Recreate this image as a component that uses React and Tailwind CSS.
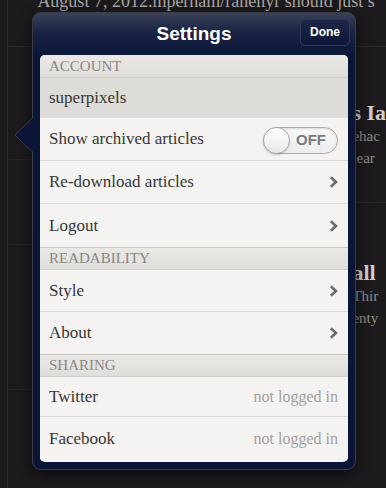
import React from 'react';

const serif = { fontFamily: '"Liberation Serif", "Times New Roman", serif' };
const sans = { fontFamily: '"Liberation Sans", Arial, sans-serif' };

const Chevron = () => (
  <svg width="9" height="12" viewBox="0 0 9 12" className="shrink-0">
    <path d="M1.8 1.2 L7 6 L1.8 10.8" fill="none" stroke="#6d6c6b" strokeWidth="2.6" strokeLinejoin="miter" />
  </svg>
);

const SectionHeader = ({ label, first = false }) => (
  <div
    className={`h-[23px] flex items-center px-[9px] text-[15px] text-[#8a8783] bg-[linear-gradient(to_bottom,#ebe9e6,#dfddda)] border-b border-[#d2d0cd] ${first ? '' : 'border-t border-t-[#c9c7c4]'}`}
    style={serif}
  >
    {label}
  </div>
);

const Row = ({ label, height = 'h-[43px]', right = null, chevron = false, shaded = false, last = false }) => (
  <div
    className={`${height} flex items-center justify-between pl-[9px] pr-[10px] ${shaded ? 'bg-[#dddcd9]' : 'bg-[#f4f3f2]'} ${last ? '' : 'border-b border-[#dddbd8]'}`}
  >
    <span className="text-[17px] text-[#383634]" style={serif}>{label}</span>
    {right}
    {chevron && <Chevron />}
  </div>
);

const Toggle = () => (
  <div className="w-[75px] h-[27px] mt-[3px] rounded-full border border-[#aaa9a8] bg-[linear-gradient(to_bottom,#f9f9f9,#ececec)] flex items-center shadow-[inset_0_1px_2px_rgba(0,0,0,0.12)]">
    <div className="w-[27px] h-[27px] -ml-px rounded-full border border-[#a9a8a7] bg-[linear-gradient(to_bottom,#ffffff,#e8e8e8)] shadow-[0_1px_2px_rgba(0,0,0,0.2)]" />
    <span className="ml-[6px] text-[15px] font-bold text-[#7b7b7b]" style={sans}>OFF</span>
  </div>
);

const NotLogged = () => (
  <span className="text-[16px] text-[#a3a09d]" style={serif}>not logged in</span>
);

const Background = () => (
  <div className="flex h-full">
    <div className="w-[13px] border-r border-[#2b292c]" />
    <div className="flex-1 flex flex-col">
      <div className="h-[47px] border-b border-[#2a282b] overflow-hidden">
        <div className="-mt-[12px] pl-[29px] whitespace-nowrap text-[18px] text-[#a9a6a6]" style={serif}>
          August 7, 2012.mperham/rahenyr should just s
        </div>
      </div>
      <div className="flex flex-1">
        <div className="w-[340px] flex flex-col">
          <div className="h-[113px] border-b border-[#262427]" />
          <div className="h-[85px] border-b border-[#262427]" />
          <div className="h-[145px] border-b border-[#262427]" />
        </div>
        <div className="flex-1 flex flex-col overflow-hidden whitespace-nowrap" style={serif}>
          <div className="h-[156px] border-b border-[#2a282b] pt-[54px] pl-[4px]">
            <div className="text-[22px] font-bold leading-[24px] text-[#cfcdcc]">s Ia</div>
            <div className="text-[15px] leading-[22px] text-[#8f8c8b]">ehac</div>
            <div className="text-[15px] leading-[22px] text-[#8f8c8b]">lear</div>
          </div>
          <div className="pt-[58px] pl-[4px]">
            <div className="text-[22px] font-bold leading-[24px] text-[#cfcdcc]">all</div>
            <div className="text-[15px] leading-[22px] text-[#8f8c8b]">Thir</div>
            <div className="text-[15px] leading-[22px] text-[#8f8c8b]">enty</div>
          </div>
        </div>
      </div>
    </div>
  </div>
);

export default function App() {
  return (
    <div className="relative w-[386px] h-[488px] overflow-hidden bg-[#1c1a1d]">
      <Background />

      {/* popover */}
      <div className="absolute left-[32px] top-[12px] w-[324px] h-[458px] rounded-[9px] border border-[#3a3c48] bg-[linear-gradient(to_bottom,#3a4259_0px,#1a2444_18px,#0b1537_43px,#0a1435_100%)] shadow-[0_4px_14px_rgba(0,0,0,0.6)] flex flex-col px-[7px] pb-[7px]">
        <div className="h-[42px] shrink-0 flex items-center justify-center relative">
          <span className="text-[19px] font-bold text-white" style={sans}>Settings</span>
          <div className="absolute right-[-2px] top-[5px] w-[50px] h-[28px] rounded-[5px] border border-[#323a55] bg-[linear-gradient(to_bottom,#1f2846,#0c1638)] shadow-[inset_0_1px_0_rgba(255,255,255,0.06)] flex items-center justify-center">
            <span className="text-[12px] font-bold text-white" style={sans}>Done</span>
          </div>
        </div>

        <div className="flex-1 rounded-[5px] overflow-hidden bg-[#f4f3f2] flex flex-col">
          <SectionHeader label="ACCOUNT" first />
          <Row label="superpixels" height="h-[40px]" shaded />
          <Row label="Show archived articles" right={<Toggle />} />
          <Row label="Re-download articles" chevron />
          <Row label="Logout" chevron last />
          <SectionHeader label="READABILITY" />
          <Row label="Style" height="h-[42px]" chevron />
          <Row label="About" height="h-[42px]" chevron last />
          <SectionHeader label="SHARING" />
          <Row label="Twitter" height="h-[40px]" right={<NotLogged />} />
          <Row label="Facebook" height="h-[44px]" right={<NotLogged />} last />
        </div>

        {/* arrow */}
        <svg className="absolute left-[-19px] top-[104px]" width="20" height="36" viewBox="0 0 20 36">
          <path d="M20 0 L1 18 L20 36 Z" fill="#0b1537" />
          <path d="M19 0.5 L1 18 L19 35.5" fill="none" stroke="#3a3c48" strokeWidth="1" />
        </svg>
      </div>
    </div>
  );
}
